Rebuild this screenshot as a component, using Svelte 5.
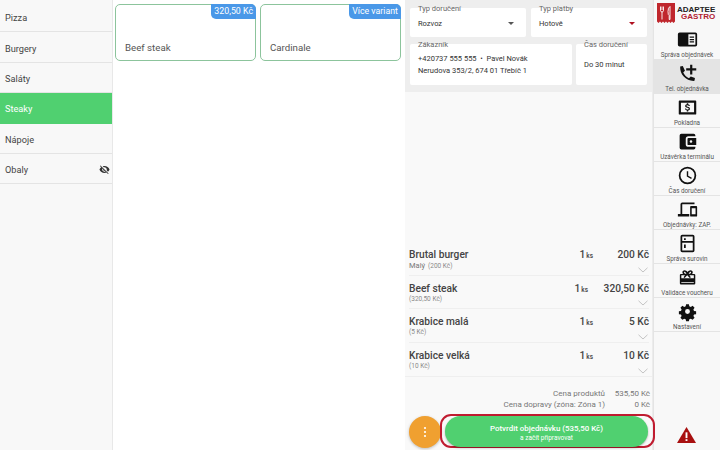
<script>
  const categories = [
    { label: 'Pizza' },
    { label: 'Burgery' },
    { label: 'Saláty' },
    { label: 'Steaky', active: true },
    { label: 'Nápoje' },
    { label: 'Obaly', hidden: true }
  ];

  const products = [
    { name: 'Beef steak', badge: '320,50 Kč' },
    { name: 'Cardinale', badge: 'Více variant' }
  ];

  const cart = [
    { name: 'Brutal burger', note: 'Malý', sub: '(200 Kč)', qty: 1, price: '200 Kč', qtyW: 'q1' },
    { name: 'Beef steak', note: '', sub: '(320,50 Kč)', qty: 1, price: '320,50 Kč', qtyW: 'q2' },
    { name: 'Krabice malá', note: '', sub: '(5 Kč)', qty: 1, price: '5 Kč', qtyW: 'q1' },
    { name: 'Krabice velká', note: '', sub: '(10 Kč)', qty: 1, price: '10 Kč', qtyW: 'q1' }
  ];

  const menu = [
    { label: 'Správa objednávek', icon: 'orders' },
    { label: 'Tel. objednávka', icon: 'phone', active: true },
    { label: 'Pokladna', icon: 'cash' },
    { label: 'Uzávěrka terminálu', icon: 'wallet' },
    { label: 'Čas doručení', icon: 'clock' },
    { label: 'Objednávky: ZAP.', icon: 'devices' },
    { label: 'Správa surovin', icon: 'fridge' },
    { label: 'Validace voucheru', icon: 'gift' },
    { label: 'Nastavení', icon: 'gear' }
  ];
</script>

<div class="app">
  <!-- Kategorie -->
  <aside class="categories">
    {#each categories as cat}
      <div class="category" class:active={cat.active}>
        <span>{cat.label}</span>
        {#if cat.hidden}
          <svg width="11" height="11" viewBox="0 0 24 24" fill="#333">
            <path d="M12 7c2.76 0 5 2.24 5 5 0 .65-.13 1.26-.36 1.83l2.92 2.92c1.51-1.26 2.7-2.89 3.43-4.75-1.73-4.39-6-7.5-11-7.5-1.4 0-2.74.25-3.98.7l2.16 2.16C10.74 7.13 11.35 7 12 7zM2 4.27l2.28 2.28.46.46C3.08 8.3 1.78 10.02 1 12c1.73 4.39 6 7.5 11 7.5 1.55 0 3.03-.3 4.38-.84l.42.42L19.73 22 21 20.73 3.27 3 2 4.27zM7.53 9.8l1.55 1.55c-.05.21-.08.43-.08.65 0 1.66 1.34 3 3 3 .22 0 .44-.03.65-.08l1.55 1.55c-.67.33-1.41.53-2.2.53-2.76 0-5-2.24-5-5 0-.79.2-1.53.53-2.2z"/>
          </svg>
        {/if}
      </div>
    {/each}
  </aside>

  <!-- Produkty -->
  <section class="products">
    {#each products as product}
      <div class="product">
        <span class="badge">{product.badge}</span>
        <span class="product-name">{product.name}</span>
      </div>
    {/each}
  </section>

  <!-- Objednávka -->
  <section class="order">
    <div class="order-head">
      <div class="row">
        <div class="field">
          <span class="legend">Typ doručení</span>
          <div class="select"><span>Rozvoz</span><i class="caret"></i></div>
        </div>
        <div class="field">
          <span class="legend">Typ platby</span>
          <div class="select"><span>Hotově</span><i class="caret red"></i></div>
        </div>
      </div>
      <div class="row tall">
        <div class="field customer">
          <span class="legend">Zákazník</span>
          <div class="customer-text">+420737 555 555 &nbsp;•&nbsp; Pavel Novák<br />Nerudova 353/2, 674 01 Třebíč 1</div>
        </div>
        <div class="field delivery">
          <span class="legend">Čas doručení</span>
          <div class="delivery-text">Do 30 minut</div>
        </div>
      </div>
    </div>

    <div class="cart">
      {#each cart as item}
        <div class="cart-row">
          <div class="cart-info">
            <div class="cart-name">{item.name}</div>
            <div class="cart-sub">{#if item.note}<span class="note">{item.note}</span>{/if}{item.sub}</div>
          </div>
          <div class="cart-qty {item.qtyW}">{item.qty}<small>ks</small></div>
          <div class="cart-price">{item.price}</div>
          <svg class="chevron" width="10" height="6" viewBox="0 0 10 6" fill="none" stroke="#c4c4c4" stroke-width="1">
            <path d="M.5 .8 5 5 9.5 .8" />
          </svg>
        </div>
      {/each}
    </div>

    <div class="totals">
      <div class="total-row"><span>Cena produktů</span><span class="total-val">535,50 Kč</span></div>
      <div class="total-row"><span>Cena dopravy (zóna: Zóna 1)</span><span class="total-val">0 Kč</span></div>
    </div>

    <div class="actions">
      <button class="more" aria-label="Více">
        <svg width="4" height="12" viewBox="0 0 4 12" fill="#fff"><circle cx="2" cy="2" r="1.1"/><circle cx="2" cy="6" r="1.1"/><circle cx="2" cy="10" r="1.1"/></svg>
      </button>
      <div class="confirm-ring">
        <button class="confirm">
          <span class="confirm-main">Potvrdit objednávku (535,50 Kč)</span>
          <span class="confirm-sub">a začít připravovat</span>
        </button>
      </div>
    </div>
  </section>

  <!-- Menu -->
  <nav class="menu">
    <div class="logo">
      <svg width="18" height="20" viewBox="0 0 18 20">
        <path d="M0 0H18V18.500L16.500 20 15 18.500 13.500 20 12 18.500 10.500 20 9 18.500 7.500 20 6 18.500 4.500 20 3 18.500 1.500 20 0 18.500Z" fill="#c0272d"/>
        <path d="M5 3.500V7M3.500 3.500V7.500Q3.500 8.800 5 9V16.500M6.500 3.500V7.500Q6.500 8.800 5 9" fill="none" stroke="#fff" stroke-width=".9"/>
        <path d="M13 3.500Q11 4.500 11 8.500T12.200 12.500V16.500H13Z" fill="none" stroke="#fff" stroke-width=".9"/>
      </svg>
      <div class="logo-text"><b>ADAPTEE</b><b class="gastro">GASTRO</b></div>
    </div>
    {#each menu as item}
      <div class="menu-item" class:active={item.active}>
        <svg width="21" height="21" viewBox="0 0 24 24" fill="#111">
          {#if item.icon === 'orders'}
            <path fill-rule="evenodd" d="M3 4h18q2 0 2 2v12q0 2-2 2H3q-2 0-2-2V6q0-2 2-2zM13 6v12h8V6zM14.500 8.500h5V10h-5zM14.500 11.300h5v1.500h-5zM14.500 14h5v1.500h-5z"/>
          {:else if item.icon === 'phone'}
            <path d="M6.600 3.500 3.600 4C3 13 10.500 21 20 20.400l.5-3.400-4.800-1.500-2 2c-2.800-1.300-5.200-3.800-6.600-6.600l2-2z"/>
            <path d="M15 2h2.500v4H22v2.500h-4.500V13H15V8.500h-4.500V6H15z"/>
          {:else if item.icon === 'cash'}
            <path fill-rule="evenodd" d="M3 4h18q1 0 1 1v14q0 1-1 1H3q-1 0-1-1V5q0-1 1-1zm1.500 2.500v11h15v-11z"/>
            <path d="M11.200 7h1.600v1.200c1 .2 1.800.8 1.900 2h-1.300c-.1-.6-.5-.9-1.400-.9-.8 0-1.300.3-1.300.8s.4.7 1.500 1c1.400.3 2.600.8 2.600 2.200 0 1.100-.8 1.800-2 2v1.200h-1.600v-1.200c-1.200-.2-2-1-2.100-2.100h1.300c.1.700.6 1.100 1.600 1.100s1.400-.4 1.400-.9-.3-.8-1.600-1.100c-1.400-.3-2.500-.9-2.500-2.100 0-1 .8-1.800 1.900-2z"/>
          {:else if item.icon === 'wallet'}
            <path fill-rule="evenodd" d="M5 3h14q2 0 2 2v1h-8q-3 0-3 3v6q0 3 3 3h8v1q0 2-2 2H5q-2 0-2-2V5q0-2 2-2zM13 8h9v8h-9q-1 0-1-1V9q0-1 1-1zm3 2.500a1.500 1.500 0 1 0 0 3 1.500 1.500 0 0 0 0-3z"/>
          {:else if item.icon === 'clock'}
            <path fill-rule="evenodd" d="M12 2a10 10 0 1 1 0 20 10 10 0 0 1 0-20zm0 2a8 8 0 1 0 0 16 8 8 0 0 0 0-16z"/>
            <path d="M11.200 7h1.600v5.200l4.200 2.500-.8 1.300-5-3z"/>
          {:else if item.icon === 'devices'}
            <path d="M4 6q0-2 2-2h14v2H6v11h8v3H1v-3h3z"/>
            <path fill-rule="evenodd" d="M16 8h6q1 0 1 1v10q0 1-1 1h-6q-1 0-1-1V9q0-1 1-1zm.800 2.500v7h4.400v-7z"/>
          {:else if item.icon === 'fridge'}
            <path fill-rule="evenodd" d="M6 2h12q2 0 2 2v16q0 2-2 2H6q-2 0-2-2V4q0-2 2-2zm0 2v5h12V4zm0 7v9h12v-9zm2-5h2v2H8zm0 7h2v4H8z"/>
          {:else if item.icon === 'gift'}
            <path fill-rule="evenodd" transform="translate(2 2) scale(.84)" d="M8 2c1.500 0 3 1 4 2.500C13 3 14.500 2 16 2c2 0 3.200 1.400 3 3 0 .7-.3 1.400-.8 2H21q1.500 0 1.500 1.500V20q0 1.500-1.500 1.500H3q-1.500 0-1.500-1.500V8.500Q1.500 7 3 7h2.800C5.300 6.400 5 5.700 5 5c-.2-1.600 1-3 3-3zm0 2c-1.300 0-1.300 2.800 2.500 3C10 5.500 9 4 8 4zm8 0c-1 0-2 1.500-2.500 3 3.800-.2 3.800-3 2.500-3zM3.500 9v4h17V9h-6l2 2.500-1.500 1-3.500-3.500-3.500 3.500-1.500-1 2-2.500zm0 9.500V19.500h17v-1z"/>
          {:else if item.icon === 'gear'}
            <path fill-rule="evenodd" d="M10 1.500h4l.6 3 2.100.9 2.600-1.700 2.800 2.800-1.700 2.600.9 2.100 3 .6v4l-3 .6-.9 2.100 1.700 2.600-2.800 2.800-2.600-1.700-2.100.9-.6 3h-4l-.6-3-2.100-.9-2.600 1.700-2.800-2.800 1.700-2.600-.9-2.100-3-.6v-4l3-.6.9-2.100L1.900 6.500l2.800-2.800 2.600 1.700 2.100-.9zM12 8.500a3.500 3.500 0 1 0 0 7 3.500 3.500 0 0 0 0-7z" transform="translate(2.400 2.400) scale(.8)"/>
          {/if}
        </svg>
        <span>{item.label}</span>
      </div>
    {/each}
    <svg class="warning" width="19" height="16" viewBox="0 0 20 18" preserveAspectRatio="none">
      <path d="M10 0 20 18H0Z" fill="#a81010"/>
      <rect x="9" y="6" width="2" height="6.500" fill="#fff"/>
      <rect x="9" y="13.700" width="2" height="2" fill="#fff"/>
    </svg>
  </nav>
</div>

<style>
  :global(body) {
    margin: 0;
    background: #fff;
  }

  .app {
    display: grid;
    grid-template-columns: 113px 292px 248px 67px;
    width: 720px;
    height: 450px;
    overflow: hidden;
    font-family: Roboto, "Liberation Sans", sans-serif;
    color: #333;
  }

  /* Kategorie */
  .categories {
    background: #f8f8f8;
    border-right: 1px solid #e8e8e8;
    box-sizing: border-box;
    padding-top: 2px;
  }

  .category {
    display: flex;
    justify-content: space-between;
    align-items: center;
    box-sizing: border-box;
    height: 30.4px;
    padding: 2px 2px 0 5px;
    font-size: 9.2px;
    color: #444;
    border-bottom: 1px solid #e4e4e4;
  }

  .category.active {
    background: #50d070;
    color: #fff;
    border-bottom-color: #50d070;
  }

  /* Produkty */
  .products {
    display: flex;
    align-items: flex-start;
    gap: 4px;
    padding: 4px 4px 0 2px;
    background: #fff;
  }

  .product {
    position: relative;
    flex: 1;
    display: flex;
    align-items: flex-end;
    box-sizing: border-box;
    height: 57px;
    padding: 0 9px 7px;
    border: 1px solid #8cc49c;
    border-radius: 5px;
    font-size: 9.7px;
    color: #555;
  }

  .badge {
    position: absolute;
    top: -1px;
    right: -1px;
    padding: 0 3px;
    height: 15px;
    line-height: 15px;
    background: #4a98e8;
    color: #fff;
    font-size: 8.8px;
    border-radius: 0 5px 0 5px;
  }

  /* Objednávka */
  .order {
    display: flex;
    flex-direction: column;
    background: #f9f9f9;
    border-right: 1px solid #ececec;
  }

  .order-head {
    display: flex;
    flex-direction: column;
    gap: 7px;
    height: 92px;
    box-sizing: border-box;
    padding: 8px 5px 0 5px;
    background: #eeeeee;
  }

  .row {
    display: flex;
    gap: 5px;
    height: 29px;
  }

  .row.tall {
    gap: 4px;
    height: 41px;
  }

  .field {
    position: relative;
    flex: 1;
    min-width: 0;
    padding: 0 8px;
    background: #fff;
    border-radius: 2px;
  }

  .legend {
    position: absolute;
    top: -4px;
    left: 6px;
    padding: 0 2px;
    font-size: 7.5px;
    line-height: 9px;
    color: #666;
    white-space: nowrap;
    background: linear-gradient(#eeeeee 45%, #fff 45%);
  }

  .select {
    display: flex;
    justify-content: space-between;
    align-items: center;
    height: 29px;
    padding: 1px 4px 0 0;
    box-sizing: border-box;
    font-size: 7.5px;
    color: #333;
  }

  .caret {
    width: 0;
    height: 0;
    border-left: 3px solid transparent;
    border-right: 3px solid transparent;
    border-top: 3px solid #555;
  }

  .caret.red {
    border-top-color: #b01020;
  }

  .customer {
    flex: 0 0 162px;
    box-sizing: border-box;
  }

  .customer-text {
    padding-top: 9px;
    font-size: 7.5px;
    line-height: 12px;
    color: #333;
    white-space: nowrap;
  }

  .delivery-text {
    padding-top: 15px;
    font-size: 7.5px;
    line-height: 11px;
    white-space: nowrap;
  }

  .cart {
    margin-top: auto;
    padding: 0 3px 0 4px;
  }

  .cart-row {
    position: relative;
    display: flex;
    align-items: flex-start;
    box-sizing: border-box;
    height: 33.5px;
    padding-top: 6px;
    border-bottom: 1px solid #efefef;
  }

  .cart-row:last-child {
    border-bottom: none;
  }

  .cart-info {
    flex: 1;
    min-width: 0;
  }

  .cart-name {
    font-size: 10.2px;
    font-weight: 500;
    color: #444;
    line-height: 13px;
  }

  .cart-sub {
    font-size: 6.5px;
    line-height: 9px;
    color: #8a8a8a;
  }

  .note {
    font-size: 7.5px;
    color: #777;
    margin-right: 3px;
  }

  .cart-qty {
    font-size: 10.2px;
    font-weight: 500;
    color: #444;
    line-height: 13px;
  }

  .cart-qty small {
    font-size: 6.5px;
    margin-left: 1px;
  }

  .cart-qty.q1 {
    margin-right: 10px;
  }

  .cart-qty.q2 {
    margin-right: 15px;
  }

  .cart-price {
    min-width: 46px;
    flex: 0 0 auto;
    white-space: nowrap;
    text-align: right;
    font-size: 10.2px;
    font-weight: 500;
    color: #444;
    line-height: 13px;
  }

  .chevron {
    position: absolute;
    right: 1px;
    bottom: 2px;
  }

  .totals {
    padding: 12px 2px 0 0;
    border-top: 1px solid #efefef;
  }

  .total-row {
    display: flex;
    justify-content: flex-end;
    font-size: 8px;
    line-height: 10.5px;
    color: #777;
  }

  .total-val {
    width: 45px;
    text-align: right;
  }

  .actions {
    position: relative;
    display: flex;
    align-items: flex-end;
    height: 34px;
    margin: 4px 0 2px;
    padding-left: 4px;
  }

  .more {
    display: flex;
    align-items: center;
    justify-content: center;
    width: 32px;
    height: 32px;
    padding: 0;
    border: none;
    border-radius: 50%;
    background: #f0a030;
    box-shadow: 0 1px 3px rgba(0, 0, 0, .25);
  }

  .confirm-ring {
    position: absolute;
    z-index: 2;
    left: 35px;
    top: 0;
    box-sizing: border-box;
    width: 215px;
    height: 34px;
    padding: 0 5px 0 3px;
    border: 2px solid #c01c30;
    border-radius: 11px;
  }

  .confirm {
    display: flex;
    flex-direction: column;
    align-items: center;
    justify-content: center;
    width: 203px;
    height: 31px;
    padding: 2px 0 0;
    border: none;
    border-radius: 16px;
    background: #50d070;
    color: #fff;
    box-shadow: 0 1px 2px rgba(0, 0, 0, .3);
    font-family: inherit;
  }

  .confirm-main {
    font-size: 7.9px;
    font-weight: 500;
    line-height: 11px;
  }

  .confirm-sub {
    font-size: 6.5px;
    line-height: 9px;
  }

  /* Menu */
  .menu {
    position: relative;
    display: flex;
    flex-direction: column;
    background: #f8f8f8;
    border-left: 1px solid #e4e4e4;
  }

  .logo {
    display: flex;
    align-items: center;
    gap: 2px;
    height: 26px;
    padding: 0 0 0 3px;
  }

  .logo-text {
    display: flex;
    flex-direction: column;
    font-family: "Liberation Sans", sans-serif;
    font-size: 8px;
    line-height: 7.5px;
    color: #222;
  }

  .gastro {
    color: #b02030;
    text-align: right;
  }

  .menu-item {
    display: flex;
    flex-direction: column;
    align-items: center;
    box-sizing: border-box;
    height: 34px;
    padding-top: 3px;
    border-bottom: 1px solid #e4e4e4;
    font-size: 6.3px;
    line-height: 8px;
    color: #555;
    white-space: nowrap;
  }

  .menu-item svg {
    flex: none;
    margin-bottom: 1px;
  }

  .menu-item.active {
    background: #e4e4e4;
  }

  .warning {
    position: absolute;
    left: 23px;
    bottom: 7px;
  }
</style>
